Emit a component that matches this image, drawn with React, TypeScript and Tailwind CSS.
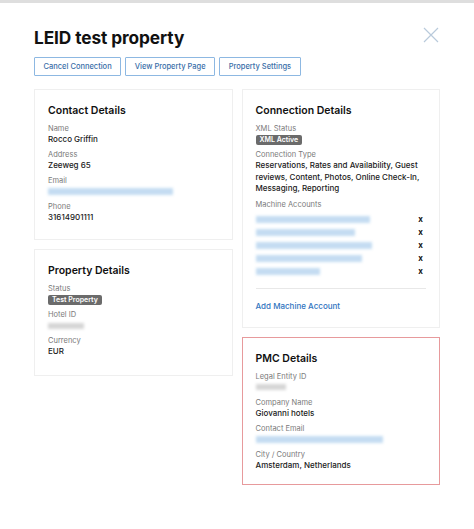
import React from "react";

function Label({ children }: { children: React.ReactNode }) {
  return <div className="text-[7.5px] leading-[10px] text-[#7a7a7a]">{children}</div>;
}

function Value({ children }: { children: React.ReactNode }) {
  return <div className="text-[8px] leading-[11px] font-medium text-[#1a1a1a]">{children}</div>;
}

function Badge({ children }: { children: React.ReactNode }) {
  return (
    <div className="mt-[1px] flex">
      <span className="h-[10px] px-[4px] rounded-[2px] bg-[#6b6b6b] text-white text-[7px] leading-[10px] font-semibold">
        {children}
      </span>
    </div>
  );
}

function BlurBlue({ w }: { w: number }) {
  return (
    <div className="h-[11px] flex items-center">
      <div className="h-[7px] bg-[#c4dcf2] blur-[1.5px]" style={{ width: w }} />
    </div>
  );
}

function BlurGray({ w }: { w: number }) {
  return (
    <div className="h-[11px] flex items-center">
      <div className="h-[6px] bg-[#d6d6d6] blur-[1.5px]" style={{ width: w }} />
    </div>
  );
}

function Card({
  title,
  children,
  className = "",
}: {
  title: string;
  children: React.ReactNode;
  className?: string;
}) {
  return (
    <div className={`border bg-white px-[13px] pt-[14px] ${className}`}>
      <div className="text-[10.5px] leading-[13px] font-semibold text-[#111] mb-[7px]">{title}</div>
      {children}
    </div>
  );
}

export default function App() {
  const machine = [114, 99, 116, 106, 64];
  return (
    <div className="min-h-[529px] bg-white font-['Inter',sans-serif] text-[#111]">
      <div className="h-[3px] bg-[#dedede]" />
      <div className="px-[34px] pt-[25px]">
        <div className="flex items-start justify-between">
          <h1 className="text-[17.3px] leading-[20px] font-bold tracking-[-0.1px] text-[#111]">
            LEID test property
          </h1>
          <svg width="16" height="16" viewBox="0 0 16 16" className="-mt-[1px] mr-[1px]">
            <path d="M1 1 L15 15 M15 1 L1 15" stroke="#b9cadb" strokeWidth="1.2" fill="none" />
          </svg>
        </div>
        <div className="mt-[9px] flex gap-[4px]">
          {["Cancel Connection", "View Property Page", "Property Settings"].map((t) => (
            <button
              key={t}
              className="h-[19px] px-[8.5px] border border-[#8db8e2] rounded-[1px] text-[7.5px] font-medium text-[#3a6ea8] leading-none bg-white"
            >
              {t}
            </button>
          ))}
        </div>

        <div className="mt-[13px] grid grid-cols-2 gap-[9px] items-start">
          <div className="flex flex-col gap-[9px]">
            <Card title="Contact Details" className="border-[#efefef] pb-[16px]">
              <div className="flex flex-col gap-[5px]">
                <div>
                  <Label>Name</Label>
                  <Value>Rocco Griffin</Value>
                </div>
                <div>
                  <Label>Address</Label>
                  <Value>Zeeweg 65</Value>
                </div>
                <div>
                  <Label>Email</Label>
                  <BlurBlue w={125} />
                </div>
                <div>
                  <Label>Phone</Label>
                  <Value>31614901111</Value>
                </div>
              </div>
            </Card>
            <Card title="Property Details" className="border-[#efefef] pb-[18px]">
              <div className="flex flex-col gap-[5px]">
                <div>
                  <Label>Status</Label>
                  <Badge>Test Property</Badge>
                </div>
                <div>
                  <Label>Hotel ID</Label>
                  <BlurGray w={36} />
                </div>
                <div>
                  <Label>Currency</Label>
                  <Value>EUR</Value>
                </div>
              </div>
            </Card>
          </div>

          <div className="flex flex-col gap-[9px]">
            <Card title="Connection Details" className="border-[#efefef] pb-[15px]">
              <div className="flex flex-col gap-[5px]">
                <div>
                  <Label>XML Status</Label>
                  <Badge>XML Active</Badge>
                </div>
                <div>
                  <Label>Connection Type</Label>
                  <div className="text-[8px] leading-[11.5px] font-medium text-[#1a1a1a]">
                    Reservations, Rates and Availability, Guest reviews, Content, Photos, Online Check-In,
                    Messaging, Reporting
                  </div>
                </div>
                <div>
                  <Label>Machine Accounts</Label>
                  <div className="pt-[3px] flex flex-col">
                    {machine.map((w, i) => (
                      <div key={i} className="h-[13px] flex items-center justify-between">
                        <div className="h-[7px] bg-[#c4dcf2] blur-[1.5px]" style={{ width: w }} />
                        <span className="text-[8px] font-bold leading-none text-[#111] mr-[3px]">x</span>
                      </div>
                    ))}
                  </div>
                </div>
              </div>
              <div className="mt-[10px] border-t border-[#e8e8e8]" />
              <div className="mt-[12px] text-[8px] leading-[11px] font-medium text-[#2f74c0]">
                Add Machine Account
              </div>
            </Card>
            <Card title="PMC Details" className="border-[1.5px] border-[#e79a9c] pb-[13px]">
              <div className="flex flex-col gap-[5px]">
                <div>
                  <Label>Legal Entity ID</Label>
                  <BlurGray w={30} />
                </div>
                <div>
                  <Label>Company Name</Label>
                  <Value>Giovanni hotels</Value>
                </div>
                <div>
                  <Label>Contact Email</Label>
                  <BlurBlue w={127} />
                </div>
                <div>
                  <Label>City / Country</Label>
                  <Value>Amsterdam, Netherlands</Value>
                </div>
              </div>
            </Card>
          </div>
        </div>
      </div>
    </div>
  );
}
